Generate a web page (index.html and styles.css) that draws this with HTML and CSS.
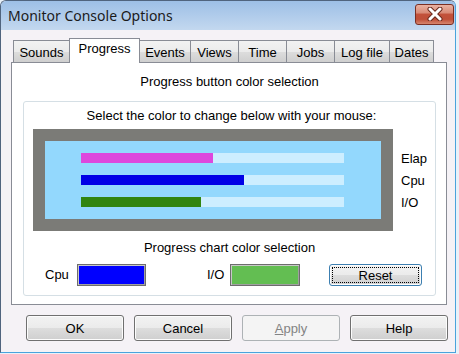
FILE: index.html
```html
<!DOCTYPE html>
<html lang="en">
<head>
  <meta charset="UTF-8">
  <title>Monitor Console Options</title>
  <link rel="stylesheet" href="styles.css">
</head>
<body>
<div class="window">
  <div class="titlebar">
    <span class="title">Monitor Console Options</span>
    <div class="close">
      <svg width="20" height="14" viewBox="0 0 20 14">
        <path d="M5 2 L15 12 M15 2 L5 12" stroke="#6b2a1e" stroke-width="5" stroke-linecap="round"/>
        <path d="M5 2 L15 12 M15 2 L5 12" stroke="#fff" stroke-width="3" stroke-linecap="round"/>
      </svg>
    </div>
  </div>
  <div class="client">
    <ul class="tabs">
      <li class="tab-sounds">Sounds</li>
      <li class="tab-progress is-active">Progress</li>
      <li class="tab-events">Events</li>
      <li class="tab-views">Views</li>
      <li class="tab-time">Time</li>
      <li class="tab-jobs">Jobs</li>
      <li class="tab-log">Log file</li>
      <li class="tab-dates">Dates</li>
    </ul>
    <div class="panel">
      <p class="caption">Progress button color selection</p>
      <div class="group">
        <p class="hint">Select the color to change below with your mouse:</p>
        <div class="chart-row">
          <div class="chart">
            <div class="chart-inner">
              <div class="track"><div class="fill elap" style="width:132px"></div></div>
              <div class="track"><div class="fill cpu" style="width:163px"></div></div>
              <div class="track"><div class="fill io" style="width:120px"></div></div>
            </div>
          </div>
          <ul class="legend">
            <li>Elap</li>
            <li>Cpu</li>
            <li>I/O</li>
          </ul>
        </div>
        <p class="caption chart-caption">Progress chart color selection</p>
        <div class="swatches">
          <span class="sw-label cpu-label">Cpu</span>
          <span class="swatch swatch-cpu"></span>
          <span class="sw-label io-label">I/O</span>
          <span class="swatch swatch-io"></span>
          <button class="btn reset is-focus">Reset</button>
        </div>
      </div>
    </div>
    <div class="buttons">
      <button class="btn">OK</button>
      <button class="btn">Cancel</button>
      <button class="btn is-disabled"><u>A</u>pply</button>
      <button class="btn">Help</button>
    </div>
  </div>
</div>
</body>
</html>
```

FILE: styles.css
```css
*{ margin: 0; padding: 0; box-sizing: border-box;}
body{ width: 459px; height: 354px; background: #e9f1f9; font-family: "Liberation Sans", Arial, sans-serif; font-size: 13px; color: #000; overflow: hidden;}
ul,li{ list-style: none;}

.window{ width: 456px; height: 353px; display: flex; flex-direction: column; border: 1px solid #4aa3dc; border-top-color: #50647e; border-left-color: #50647e; border-radius: 6px 6px 0 0; overflow: hidden; background: #f5f2f6;}

.titlebar{ height: 29px; flex: none; display: flex; align-items: center; padding: 0 1px 0 7px; background: linear-gradient(#9dbfe6, #c3d8ef);}
.titlebar .title{ flex: 1; font-family: "Noto Sans", sans-serif; font-size: 14px; color: #1a1a1a; padding-bottom: 1px;}
.titlebar .close{ width: 39px; height: 21px; margin-bottom: 3px; display: flex; align-items: center; justify-content: center; border: 1px solid #7a2f23; border-radius: 3px; background: linear-gradient(#eab2a2 0%, #d98c78 40%, #c2513a 50%, #bf4f38 75%, #d7866e 100%);}

.client{ flex: 1; display: flex; flex-direction: column; padding: 8px 0 0 10px;}

.tabs{ display: flex; align-items: flex-end; height: 24px; margin-left: 2px; position: relative; z-index: 1;}
.tabs li{ height: 22px; margin-right: -1px; border: 1px solid #898c95; border-bottom: none; display: flex; align-items: center; justify-content: center; padding-top: 1px; background: linear-gradient(#f2f2f2 0%, #ebebeb 50%, #dddddd 51%, #cfcfcf 100%);}
.tabs li.is-active{ height: 25px; margin-bottom: -1px; background: #fff; padding-top: 0; padding-bottom: 5px; position: relative; z-index: 2;}
.tab-sounds{ width: 57px;}
.tab-progress{ width: 71px;}
.tab-events{ width: 52px;}
.tab-views{ width: 49px;}
.tab-time{ width: 49px;}
.tab-jobs{ width: 49px;}
.tab-log{ width: 56px;}
.tab-dates{ width: 45px;}

.panel{ width: 436px; background: #fff; border: 1px solid #898c95; padding: 0 10px 8px 11px;}
.caption{ text-align: center; line-height: 16px; margin-top: 11px;}
.group{ margin-top: 11px; border: 1px solid #d5dfe5; border-radius: 3px; padding: 6px 0 9px;}
.hint{ text-align: center; line-height: 16px; padding-left: 4px;}

.chart-row{ display: flex; margin-top: 5px; padding-left: 9px;}
.chart{ width: 360px; height: 102px; padding: 12px; background: #7b7b77;}
.chart-inner{ height: 78px; background: #93d8fd; padding: 12px 36px; display: flex; flex-direction: column; gap: 12px;}
.track{ width: 263px; height: 10px; background: #cdeeff;}
.fill{ height: 10px;}
.fill.elap{ background: #dd47dd;}
.fill.cpu{ background: #0000e6;}
.fill.io{ background: #318510;}
.legend{ margin-left: 8px; padding-top: 19px;}
.legend li{ line-height: 22px;}

.chart-caption{ margin-top: 9px;}
.swatches{ display: flex; align-items: center; margin-top: 8px; padding-left: 21px; height: 22px;}
.sw-label{ line-height: 16px;}
.cpu-label{ width: 32px;}
.io-label{ width: 23px; margin-left: 61px;}
.swatch{ height: 22px; border: 1px solid #6d6d6d; box-shadow: inset 1px 1px 0 #c8c8c8, inset -1px -1px 0 #a0a0a0;}
.swatch-cpu{ width: 69px; background: #0000ff;}
.swatch-io{ width: 70px; background: #63be52;}

.btn{ font-family: "Liberation Sans", Arial, sans-serif; font-size: 13px; color: #000; border: 1px solid #707070; border-radius: 3px; background: linear-gradient(#f2f2f2 0%, #ebebeb 50%, #dddddd 51%, #cfcfcf 100%); box-shadow: inset 0 0 0 1px #fcfcfc;}
.btn.reset{ width: 93px; height: 22px; margin-left: 29px;}
.btn.is-focus{ border-color: #3c7fb1; outline: 1px dotted #000; outline-offset: -4px;}
.btn.is-disabled{ color: #838383; border-color: #adb2b5; background: #f4f4f4; box-shadow: none;}
.btn u{ text-decoration: underline;}

.buttons{ display: flex; gap: 10px; margin: 10px 0 0 15px;}
.buttons .btn{ width: 98px; height: 26px;}
```
